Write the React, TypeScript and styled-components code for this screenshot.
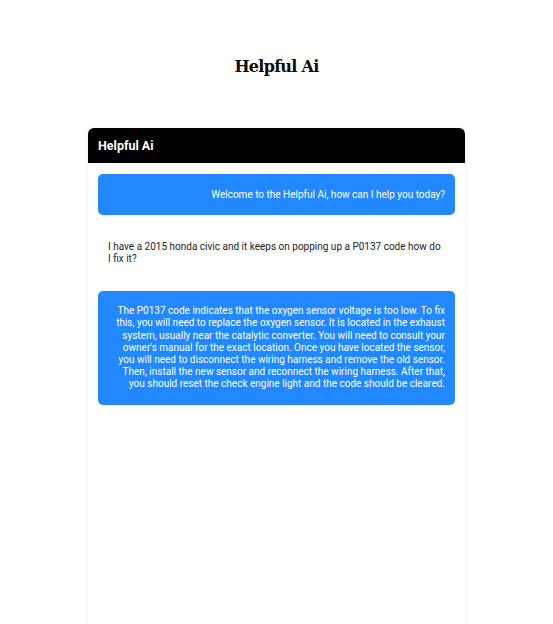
import styled, { createGlobalStyle } from "styled-components";

const GlobalStyle = createGlobalStyle`
  html, body {
    margin: 0;
    padding: 0;
    background: #ffffff;
  }
  body {
    font-family: Roboto, "Liberation Sans", sans-serif;
  }
`;

const Page = styled.div`
  width: 100%;
  min-height: 624px;
  display: flex;
  flex-direction: column;
  align-items: center;
  overflow: hidden;
`;

const Title = styled.h1`
  margin: 55px 0 0;
  height: 24px;
  font-family: "DejaVu Serif", "Liberation Serif", serif;
  font-weight: 700;
  font-size: 16px;
  letter-spacing: -0.7px;
  line-height: 24px;
  color: #0a0a0a;
`;

const ChatCard = styled.div`
  margin-top: 49px;
  width: 377px;
  height: 520px;
  display: flex;
  flex-direction: column;
  background: #ffffff;
  border-radius: 6px;
  box-shadow: 0 0 4px rgba(0, 0, 0, 0.08);
`;

const ChatHeader = styled.div`
  height: 35px;
  display: flex;
  align-items: center;
  padding: 0 10px;
  background: #000000;
  border-radius: 6px 6px 0 0;
  color: #ffffff;
  font-size: 12.5px;
  font-weight: 700;
`;

const MessageList = styled.div`
  display: flex;
  flex-direction: column;
  gap: 11px;
  padding: 11px 10px;
`;

const Message = styled.div<{ $bot?: boolean }>`
  padding: 14.5px 10px;
  border-radius: 5px;
  font-size: 10px;
  line-height: 12.2px;
  background: ${(p) => (p.$bot ? "#2188ff" : "transparent")};
  color: ${(p) => (p.$bot ? "#ffffff" : "#222222")};
  text-align: ${(p) => (p.$bot ? "right" : "left")};
`;

const messages = [
  { bot: true, text: "Welcome to the Helpful Ai, how can I help you today?" },
  {
    bot: false,
    text: "I have a 2015 honda civic and it keeps on popping up a P0137 code how do I fix it?",
  },
  {
    bot: true,
    text: "The P0137 code indicates that the oxygen sensor voltage is too low. To fix this, you will need to replace the oxygen sensor. It is located in the exhaust system, usually near the catalytic converter. You will need to consult your owner's manual for the exact location. Once you have located the sensor, you will need to disconnect the wiring harness and remove the old sensor. Then, install the new sensor and reconnect the wiring harness. After that, you should reset the check engine light and the code should be cleared.",
  },
];

const App = () => {
  return (
    <>
      <GlobalStyle />
      <Page>
        <Title>Helpful Ai</Title>
        <ChatCard>
          <ChatHeader>Helpful Ai</ChatHeader>
          <MessageList>
            {messages.map((m, i) => (
              <Message key={i} $bot={m.bot}>
                {m.text}
              </Message>
            ))}
          </MessageList>
        </ChatCard>
      </Page>
    </>
  );
};

export default App;
